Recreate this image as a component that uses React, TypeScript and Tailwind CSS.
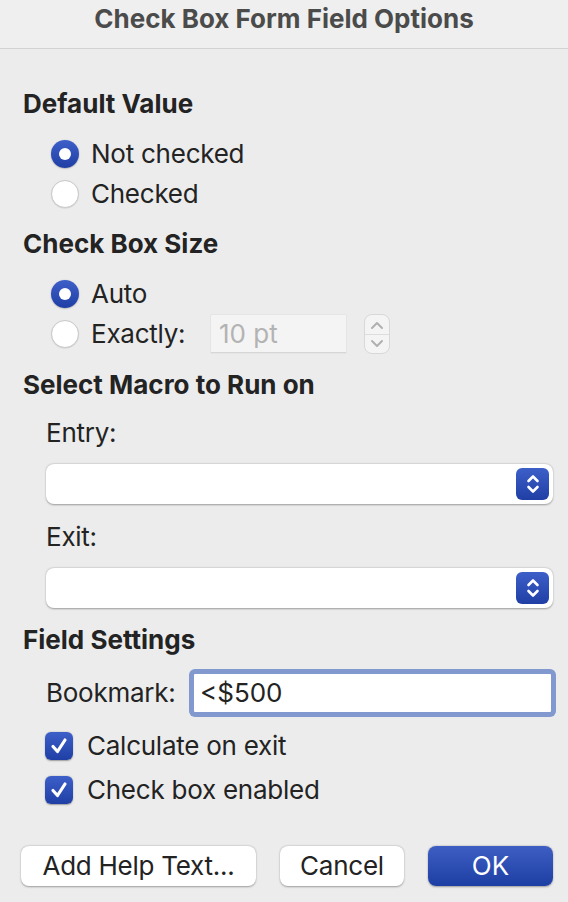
import React from "react";

const FONT = { fontFamily: "Inter, 'Noto Sans', 'Liberation Sans', sans-serif" };

function Radio({ checked }: { checked: boolean }) {
  if (checked) {
    return (
      <div className="w-[28px] h-[28px] rounded-full bg-gradient-to-b from-[#3d5fc8] to-[#1f3fa5] flex items-center justify-center shadow-[0_0.5px_1.5px_rgba(0,0,0,0.35)] shrink-0">
        <div className="w-[12px] h-[12px] rounded-full bg-white" />
      </div>
    );
  }
  return (
    <div className="w-[28px] h-[28px] rounded-full bg-white border border-[#c9c9c9] shadow-[0_0.5px_1px_rgba(0,0,0,0.12)] shrink-0" />
  );
}

function Checkbox() {
  return (
    <div className="w-[28px] h-[28px] rounded-[6px] bg-gradient-to-b from-[#3d5fc8] to-[#1f3fa5] flex items-center justify-center shadow-[0_0.5px_1.5px_rgba(0,0,0,0.35)] shrink-0">
      <svg width="20" height="20" viewBox="0 0 20 20">
        <path d="M4 10.5 L8.5 15.5 L16 4" fill="none" stroke="white" strokeWidth="3.2" strokeLinecap="round" strokeLinejoin="round" />
      </svg>
    </div>
  );
}

function Select() {
  return (
    <div className="ml-[23px] w-[507px] h-[40px] shrink-0 rounded-[8px] bg-white shadow-[0_0.5px_2px_rgba(0,0,0,0.35)] flex items-center justify-end pr-[4px]">
      <div className="w-[33px] h-[32px] rounded-[6px] bg-gradient-to-b from-[#3d5fc8] to-[#1f3fa5] flex items-center justify-center">
        <svg width="16" height="24" viewBox="0 0 16 24">
          <path d="M3.5 9 L8 4.5 L12.5 9" fill="none" stroke="white" strokeWidth="2.6" strokeLinecap="round" strokeLinejoin="round" />
          <path d="M3.5 15 L8 19.5 L12.5 15" fill="none" stroke="white" strokeWidth="2.6" strokeLinecap="round" strokeLinejoin="round" />
        </svg>
      </div>
    </div>
  );
}

function Heading({ children, className = "" }: { children: React.ReactNode; className?: string }) {
  return <div className={"h-[40px] leading-[40px] text-[26px] font-bold text-[#232323] " + className}>{children}</div>;
}

const BODY = "text-[26px] leading-[40px] text-[#232323] tracking-[-0.25px]";

function RadioRow({ checked, label }: { checked: boolean; label: string }) {
  return (
    <div className="h-[40px] flex items-center pl-[28px]">
      <Radio checked={checked} />
      <span className={"ml-[12px] " + BODY}>{label}</span>
    </div>
  );
}

export default function App() {
  return (
    <div className="w-[568px] h-[902px] bg-[#ececec] overflow-hidden" style={FONT}>
      <div className="h-[49px] border-b border-[#d2d2d2] bg-[#efefef] text-center font-bold text-[26px] leading-[38px] text-[#4b4b4b]">
        Check Box Form Field Options
      </div>
      <div className="px-[23px]">
        <Heading className="mt-[35px]">Default Value</Heading>
        <div className="mt-[10px]">
          <RadioRow checked label="Not checked" />
          <RadioRow checked={false} label="Checked" />
        </div>
        <Heading className="mt-[10px]">Check Box Size</Heading>
        <div className="mt-[10px]">
          <RadioRow checked label="Auto" />
          <div className="h-[40px] flex items-center pl-[28px]">
            <Radio checked={false} />
            <span className={"ml-[12px] w-[120px] shrink-0 " + BODY}>Exactly:</span>
            <div className="w-[135px] h-[38px] shrink-0 bg-[#f4f4f4] border-b border-[#d6d6d6] shadow-[0_0_0_0.5px_rgba(0,0,0,0.06)] text-[26px] leading-[38px] text-[#b3b3b3] pl-[8px]">
              10 pt
            </div>
            <div className="ml-[18px] w-[26px] h-[40px] shrink-0 rounded-[8px] bg-[#f4f4f4] border border-[#d8d8d8] flex flex-col items-center justify-center">
              <svg width="16" height="16" viewBox="0 0 16 16">
                <path d="M3 10 L8 5 L13 10" fill="none" stroke="#b0b0b0" strokeWidth="2" strokeLinecap="round" strokeLinejoin="round" />
              </svg>
              <div className="w-[24px] h-px bg-[#dddddd]" />
              <svg width="16" height="16" viewBox="0 0 16 16">
                <path d="M3 6 L8 11 L13 6" fill="none" stroke="#b0b0b0" strokeWidth="2" strokeLinecap="round" strokeLinejoin="round" />
              </svg>
            </div>
          </div>
        </div>
        <Heading className="mt-[11px]">Select Macro to Run on</Heading>
        <div className={"mt-[8px] h-[40px] pl-[23px] " + BODY}>Entry:</div>
        <div className="mt-[11px] flex">
          <Select />
        </div>
        <div className={"mt-[13px] h-[40px] pl-[23px] " + BODY}>Exit:</div>
        <div className="mt-[11px] flex">
          <Select />
        </div>
        <Heading className="mt-[12px]">Field Settings</Heading>
        <div className="mt-[9px] h-[48px] flex items-center pl-[23px]">
          <span className={"w-[143px] shrink-0 " + BODY}>Bookmark:</span>
          <div className="w-[367px] h-[48px] shrink-0 rounded-[6px] bg-[#8199cf] p-[5px]">
            <div className="w-full h-full bg-white rounded-[1px] text-[26px] leading-[38px] text-[#232323] pl-[6px]">
              &lt;$500
            </div>
          </div>
        </div>
        <div className="mt-[7px]">
          <div className="h-[44px] flex items-center pl-[22px]">
            <Checkbox />
            <span className={"ml-[14px] " + BODY}>Calculate on exit</span>
          </div>
          <div className="h-[44px] flex items-center pl-[22px]">
            <Checkbox />
            <span className={"ml-[14px] " + BODY}>Check box enabled</span>
          </div>
        </div>
        <div className="mt-[34px] flex items-center">
          <div className={"ml-[-2px] w-[235px] h-[40px] shrink-0 rounded-[8px] bg-white shadow-[0_0.5px_2px_rgba(0,0,0,0.35)] text-center " + BODY}>
            Add Help Text...
          </div>
          <div className={"ml-[24px] w-[124px] h-[40px] shrink-0 rounded-[8px] bg-white shadow-[0_0.5px_2px_rgba(0,0,0,0.35)] text-center " + BODY}>
            Cancel
          </div>
          <div className="ml-[24px] w-[125px] h-[40px] shrink-0 rounded-[8px] bg-gradient-to-b from-[#3e5ec4] to-[#1d3ea3] shadow-[0_0.5px_2px_rgba(0,0,0,0.35)] text-center text-[26px] leading-[40px] text-white">
            OK
          </div>
        </div>
      </div>
    </div>
  );
}
